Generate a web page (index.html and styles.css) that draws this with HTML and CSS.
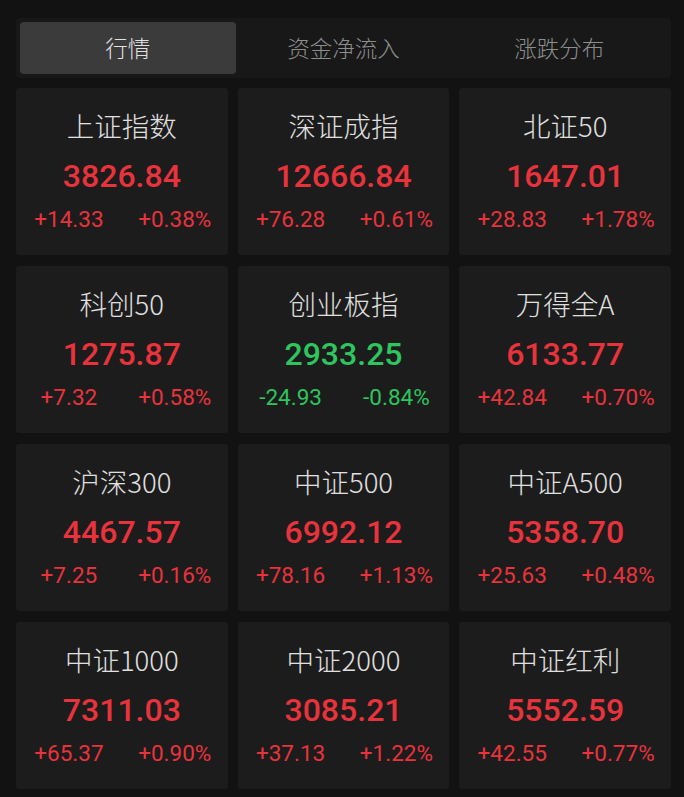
FILE: index.html
```html
<!DOCTYPE html>
<html lang="zh-CN">
<head>
<meta charset="utf-8">
<link rel="stylesheet" href="styles.css">
</head>
<body>
<div class="page">
  <div class="tabs">
    <div class="tab active">行情</div>
    <div class="tab">资金净流入</div>
    <div class="tab">涨跌分布</div>
  </div>
  <div class="grid">
    <div class="card up"><div class="name">上证指数</div><div class="price">3826.84</div><div class="chg"><span>+14.33</span><span>+0.38%</span></div></div>
    <div class="card up"><div class="name">深证成指</div><div class="price">12666.84</div><div class="chg"><span>+76.28</span><span>+0.61%</span></div></div>
    <div class="card up"><div class="name">北证50</div><div class="price">1647.01</div><div class="chg"><span>+28.83</span><span>+1.78%</span></div></div>
    <div class="card up"><div class="name">科创50</div><div class="price">1275.87</div><div class="chg"><span>+7.32</span><span>+0.58%</span></div></div>
    <div class="card down"><div class="name">创业板指</div><div class="price">2933.25</div><div class="chg"><span>-24.93</span><span>-0.84%</span></div></div>
    <div class="card up"><div class="name">万得全A</div><div class="price">6133.77</div><div class="chg"><span>+42.84</span><span>+0.70%</span></div></div>
    <div class="card up"><div class="name">沪深300</div><div class="price">4467.57</div><div class="chg"><span>+7.25</span><span>+0.16%</span></div></div>
    <div class="card up"><div class="name">中证500</div><div class="price">6992.12</div><div class="chg"><span>+78.16</span><span>+1.13%</span></div></div>
    <div class="card up"><div class="name">中证A500</div><div class="price">5358.70</div><div class="chg"><span>+25.63</span><span>+0.48%</span></div></div>
    <div class="card up"><div class="name">中证1000</div><div class="price">7311.03</div><div class="chg"><span>+65.37</span><span>+0.90%</span></div></div>
    <div class="card up"><div class="name">中证2000</div><div class="price">3085.21</div><div class="chg"><span>+37.13</span><span>+1.22%</span></div></div>
    <div class="card up"><div class="name">中证红利</div><div class="price">5552.59</div><div class="chg"><span>+42.55</span><span>+0.77%</span></div></div>
  </div>
</div>
</body>
</html>
```
FILE: styles.css
```css
html, body {
  margin: 0;
  padding: 0;
  background: #121212;
}
body {
  width: 684px;
  height: 797px;
  overflow: hidden;
  font-family: Roboto, "Noto Sans CJK SC", sans-serif;
}
.page {
  padding: 18px 13px 0 16px;
}
.tabs {
  display: grid;
  grid-template-columns: repeat(3, 1fr);
  height: 60px;
  box-sizing: border-box;
  padding: 4px;
  background: #181818;
  border-radius: 4px;
}
.tab {
  display: flex;
  align-items: center;
  justify-content: center;
  padding-bottom: 3px;
  font-family: "Noto Sans CJK SC", sans-serif;
  font-weight: 300;
  font-size: 22.5px;
  color: #8e8e8e;
  border-radius: 4px;
}
.tab.active {
  background: #3b3b3b;
  color: #e2e2e2;
}
.grid {
  margin-top: 10px;
  display: grid;
  grid-template-columns: repeat(3, 1fr);
  column-gap: 10px;
  row-gap: 11px;
}
.card {
  height: 167px;
  box-sizing: border-box;
  padding-top: 12px;
  background: #1c1c1c;
  border-radius: 3px;
  display: flex;
  flex-direction: column;
  align-items: stretch;
  text-align: center;
}
.name {
  font-family: "Noto Sans CJK SC", sans-serif;
  font-weight: 300;
  font-size: 27.5px;
  line-height: 50px;
  color: #e0e0e0;
}
.price {
  font-family: Roboto, sans-serif;
  font-weight: 500;
  font-size: 32px;
  line-height: 52px;
}
.chg {
  display: grid;
  grid-template-columns: 1fr 1fr;
  font-family: Roboto, sans-serif;
  font-size: 22.5px;
  line-height: 34px;
}
.up .price, .up .chg { color: #e8333d; }
.down .price, .down .chg { color: #2ec45e; }
```
